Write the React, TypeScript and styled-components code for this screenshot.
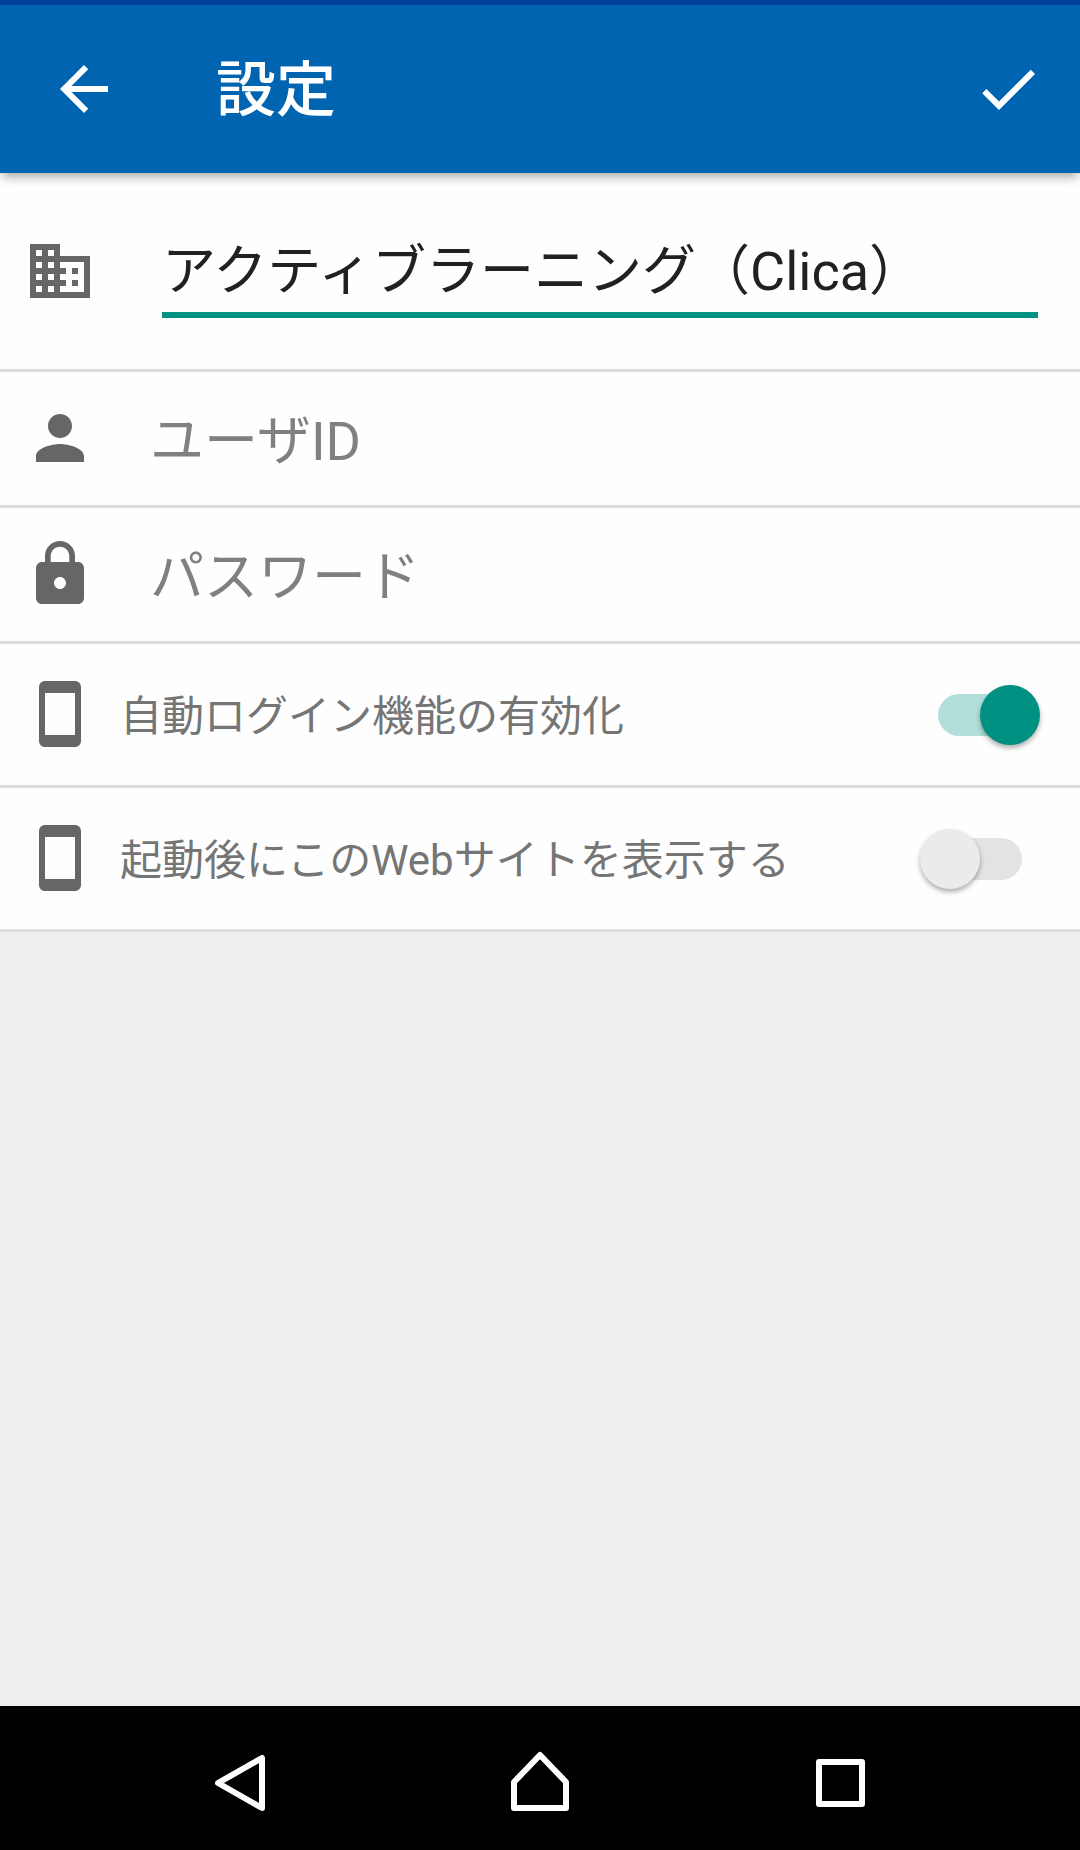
import React, { useState } from "react";
import styled, { createGlobalStyle } from "styled-components";

const GlobalStyle = createGlobalStyle`
  *, *::before, *::after { box-sizing: border-box; }
  body {
    margin: 0;
    background: #eee;
    font-family: Roboto, "Noto Sans CJK JP", sans-serif;
  }
`;

const Screen = styled.div`
  display: flex;
  flex-direction: column;
  min-height: 100vh;
`;

const AppBar = styled.header`
  position: relative;
  z-index: 1;
  display: flex;
  align-items: center;
  height: 173px;
  padding: 0 36px 0 48px;
  border-top: 5px solid #00429b;
  background: #0064b0;
  color: #fff;
  box-shadow: 0 6px 10px -2px rgba(0, 0, 0, 0.32);
`;

const Title = styled.h1`
  flex: 1;
  margin: 0 0 0 96px;
  padding-top: 4px;
  font-size: 60px;
  line-height: 72px;
  font-weight: 500;
`;

const IconButton = styled.button`
  display: flex;
  padding: 0;
  border: 0;
  background: none;
  color: inherit;
  cursor: pointer;
`;

const Icon = styled.svg`
  display: block;
  flex: none;
  width: 72px;
  height: 72px;
  fill: currentColor;
`;

const Form = styled.form`
  background: #fefefe;
`;

const Row = styled.div<{ $height: number; $gap: number }>`
  display: flex;
  align-items: center;
  gap: ${(p) => p.$gap}px;
  min-height: ${(p) => p.$height}px;
  padding: 0 42px 1px 24px;
  border-bottom: 3px solid #dcdddd;
  color: #666;
`;

const Field = styled.input<{ $active?: boolean }>`
  flex: 1;
  min-width: 0;
  height: ${(p) => (p.$active ? 94 : 84)}px;
  padding: ${(p) => (p.$active ? "0 0 2px" : "6px 0 0")};
  border: 0;
  border-bottom: ${(p) => (p.$active ? "6px solid #009284" : "0")};
  border-radius: 0;
  outline: 0;
  background: none;
  color: #212121;
  font: 400 54px/78px Roboto, "Noto Sans CJK JP", sans-serif;

  &::placeholder {
    color: #808080;
    opacity: 1;
  }
`;

const Label = styled.label`
  flex: 1;
  padding-top: 5px;
  color: #757575;
  font-size: 42px;
  line-height: 60px;
`;

const Switch = styled.input`
  appearance: none;
  position: relative;
  flex: none;
  width: 84px;
  height: 42px;
  margin: 2px 16px 0 0;
  border-radius: 21px;
  background: #e3e3e3;
  cursor: pointer;

  &::before {
    content: "";
    position: absolute;
    top: -9px;
    left: -18px;
    width: 60px;
    height: 60px;
    border-radius: 50%;
    background: #ebebeb;
    box-shadow: 0 3px 5px rgba(0, 0, 0, 0.32);
  }

  &:checked {
    background: #b2dfda;
  }

  &:checked::before {
    left: 42px;
    background: #009182;
  }
`;

const NavBar = styled.nav`
  display: grid;
  grid-template-columns: repeat(3, 1fr);
  place-items: center;
  height: 144px;
  margin-top: auto;
  padding: 0 90px;
  background: #000;
  color: #fff;
`;

const NavIcon = styled.svg`
  display: block;
  width: 72px;
  height: 72px;
  fill: none;
  stroke: currentColor;
  stroke-width: 6;
  stroke-linejoin: round;
`;

const PhoneIcon = () => (
  <Icon viewBox="0 0 24 24" aria-hidden="true">
    <path d="M17 1H7C5.9 1 5 1.9 5 3v18c0 1.100.9 2 2 2h10c1.100 0 2-.9 2-2V3c0-1.100-.9-2-2-2zm0 18H7V5h10v14z" />
  </Icon>
);

export default function App() {
  const [site, setSite] = useState("アクティブラーニング（Clica）");
  const [user, setUser] = useState("");
  const [password, setPassword] = useState("");
  const [autoLogin, setAutoLogin] = useState(true);
  const [openSite, setOpenSite] = useState(false);

  return (
    <Screen>
      <GlobalStyle />
      <AppBar>
        <IconButton type="button" aria-label="戻る">
          <Icon viewBox="0 0 24 24">
            <path d="M20 11H7.830l5.590-5.590L12 4l-8 8 8 8 1.410-1.410L7.830 13H20v-2z" />
          </Icon>
        </IconButton>
        <Title>設定</Title>
        <IconButton type="submit" form="settings" aria-label="保存">
          <Icon viewBox="0 0 24 24">
            <path d="M9 16.170L4.830 12l-1.420 1.410L9 19 21 7l-1.410-1.410z" />
          </Icon>
        </IconButton>
      </AppBar>

      <Form id="settings" onSubmit={(e) => e.preventDefault()}>
        <Row $height={199} $gap={66}>
          <Icon viewBox="0 0 24 24" aria-hidden="true">
            <path d="M12 7V3H2v18h20V7H12zM6 19H4v-2h2v2zm0-4H4v-2h2v2zm0-4H4V9h2v2zm0-4H4V5h2v2zm4 12H8v-2h2v2zm0-4H8v-2h2v2zm0-4H8V9h2v2zm0-4H8V5h2v2zm10 12h-8v-2h2v-2h-2v-2h2v-2h-2V9h8v10zm-2-8h-2v2h2v-2zm0 4h-2v2h2v-2z" />
          </Icon>
          <Field
            $active
            type="text"
            aria-label="サイト名"
            value={site}
            onChange={(e) => setSite(e.target.value)}
          />
        </Row>
        <Row $height={136} $gap={54}>
          <Icon viewBox="0 0 24 24" aria-hidden="true">
            <path d="M12 12c2.210 0 4-1.790 4-4s-1.790-4-4-4-4 1.790-4 4 1.790 4 4 4zm0 2c-2.670 0-8 1.340-8 4v2h16v-2c0-2.660-5.330-4-8-4z" />
          </Icon>
          <Field
            type="text"
            aria-label="ユーザID"
            placeholder="ユーザID"
            value={user}
            onChange={(e) => setUser(e.target.value)}
          />
        </Row>
        <Row $height={136} $gap={54}>
          <Icon viewBox="0 0 24 24" aria-hidden="true">
            <path d="M18 8h-1V6c0-2.760-2.240-5-5-5S7 3.240 7 6v2H6c-1.100 0-2 .9-2 2v10c0 1.100.9 2 2 2h12c1.100 0 2-.9 2-2V10c0-1.100-.9-2-2-2zm-6 9c-1.100 0-2-.9-2-2s.9-2 2-2 2 .9 2 2-.9 2-2 2zm3.100-9H8.900V6c0-1.710 1.390-3.100 3.100-3.100s3.100 1.390 3.100 3.100v2z" />
          </Icon>
          <Field
            type="password"
            aria-label="パスワード"
            placeholder="パスワード"
            value={password}
            onChange={(e) => setPassword(e.target.value)}
          />
        </Row>
        <Row $height={144} $gap={24}>
          <PhoneIcon />
          <Label htmlFor="auto-login">自動ログイン機能の有効化</Label>
          <Switch
            id="auto-login"
            type="checkbox"
            role="switch"
            checked={autoLogin}
            onChange={(e) => setAutoLogin(e.target.checked)}
          />
        </Row>
        <Row $height={144} $gap={24}>
          <PhoneIcon />
          <Label htmlFor="open-site">起動後にこのWebサイトを表示する</Label>
          <Switch
            id="open-site"
            type="checkbox"
            role="switch"
            checked={openSite}
            onChange={(e) => setOpenSite(e.target.checked)}
          />
        </Row>
      </Form>

      <NavBar aria-label="システム">
        <IconButton type="button" aria-label="戻る">
          <NavIcon viewBox="0 0 72 72">
            <path d="M14 41L58 16V66z" />
          </NavIcon>
        </IconButton>
        <IconButton type="button" aria-label="ホーム">
          <NavIcon viewBox="0 0 72 72">
            <path d="M10 66V40L36 13L62 40V66z" />
          </NavIcon>
        </IconButton>
        <IconButton type="button" aria-label="最近のアプリ">
          <NavIcon viewBox="0 0 72 72">
            <path d="M15 20H58V62H15z" />
          </NavIcon>
        </IconButton>
      </NavBar>
    </Screen>
  );
}
